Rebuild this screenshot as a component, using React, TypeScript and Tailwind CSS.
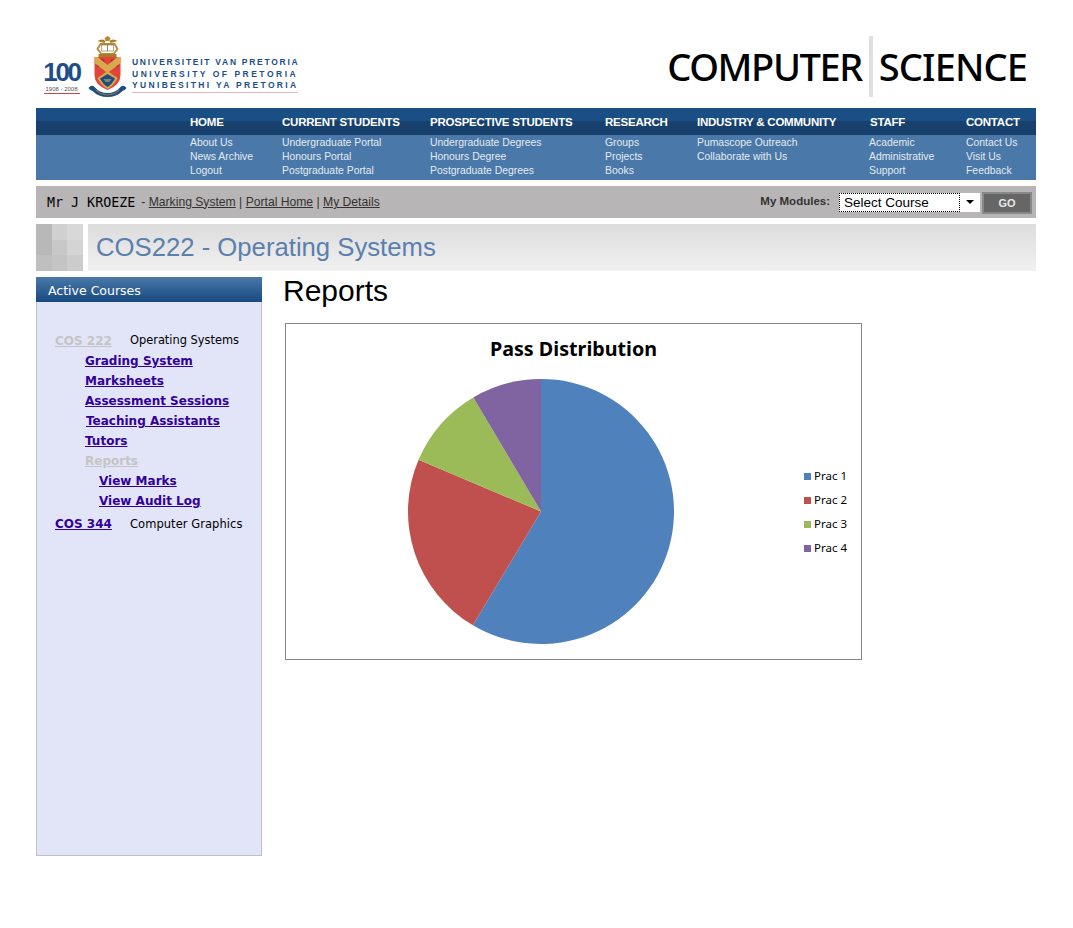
const nav = [
  { h: "HOME", l: ["About Us", "News Archive", "Logout"] },
  { h: "CURRENT STUDENTS", l: ["Undergraduate Portal", "Honours Portal", "Postgraduate Portal"] },
  { h: "PROSPECTIVE STUDENTS", l: ["Undergraduate Degrees", "Honours Degree", "Postgraduate Degrees"] },
  { h: "RESEARCH", l: ["Groups", "Projects", "Books"] },
  { h: "INDUSTRY & COMMUNITY", l: ["Pumascope Outreach", "Collaborate with Us"] },
  { h: "STAFF", l: ["Academic", "Administrative", "Support"] },
  { h: "CONTACT", l: ["Contact Us", "Visit Us", "Feedback"] },
];

function Crest() {
  return (
    <svg width="40" height="62" viewBox="0 0 40 62" className="shrink-0">
      <g transform="translate(-0.5 0)">
        <path d="M20 0l3 2 -1 3h-4l-1-3z" fill="#b98a35" />
        <path d="M10 5q5-3 8 0l-1 2q-4-1-7-2zM30 5q-5-3-8 0l1 2q4-1 7-2z" fill="#a87a2c" />
        <path d="M13 8h14l3 5-4 5H14l-4-5z" fill="none" stroke="#b98a35" strokeWidth="1.8" />
        <path d="M14 9h12v6h-12z" fill="#fff" stroke="#8a6a30" strokeWidth="0.6" />
        <path d="M20 9v6" stroke="#8a6a30" strokeWidth="0.8" />
        <path d="M11 18h18v3H11z" fill="#a87a2c" />
        <path d="M7 21h26v18q0 10-13 15Q7 49 7 39z" fill="#e2443a" />
        <path d="M9 23h8v8H9zM23 23h8v8h-8z" fill="#b5322e" />
        <path d="M20 37L7 27v-6h3l10 8 10-8h3v6z" fill="#d9a94f" />
        <path d="M20 35l10 7q-3 7-10 11q-7-4-10-11z" fill="#d9a94f" />
        <path d="M20 38l7.500 4.500q-3 6-7.500 8.500q-4.500-2.500-7.500-8.500z" fill="#1d4e80" />
        <path d="M16 43h8l-2 3h-4z" fill="#d9b060" opacity="0.55" />
        <path d="M1 52q3-4 6-1q5 6 13 6t13-6q3-3 6 1q-1 2-4 3q-6 6-15 6t-15-6q-3-1-4-3z" fill="#1d4e80" />
        <path d="M8 54q5 5 12 5t12-5" fill="none" stroke="#b98a35" strokeWidth="0.8" />
      </g>
    </svg>
  );
}

function Pie() {
  const cx = 541 - 286, cy = 511.5 - 324, r = 133;
  const slices: [number, number, string][] = [
    [0, 210.8, "#4f81bd"],
    [210.8, 293, "#c0504d"],
    [293, 329.4, "#9bbb59"],
    [329.4, 360, "#8064a2"],
  ];
  const pt = (a: number) => {
    const t = (a * Math.PI) / 180;
    return `${(cx + r * Math.sin(t)).toFixed(2)} ${(cy - 132.5 * Math.cos(t)).toFixed(2)}`;
  };
  return (
    <svg width="420" height="335" viewBox="0 0 420 335" className="absolute left-0 top-0">
      {slices.map(([a, b, c]) => (
        <path key={c} d={`M${cx} ${cy}L${pt(a)}A${r} 132.5 0 ${b - a > 180 ? 1 : 0} 1 ${pt(b)}Z`} fill={c} />
      ))}
    </svg>
  );
}

const tile = ["#b8b8b8", "#d0d0d0", "#d8d8d8", "#b8b8b8", "#c8c8c8", "#d4d4d4", "#bfbfbf", "#c4c4c4", "#cccccc"];

const verdana = "font-['DejaVu_Sans',sans-serif]";
const linkCls = "font-bold text-[12px] leading-[20px] text-[#330099] underline";

export default function App() {
  return (
    <div className="w-[1073px] h-[928px] bg-white pl-[36px] pt-[36px] font-['Liberation_Sans',sans-serif]">
      <div className="w-[1000px]">
        <header className="h-[72px] flex items-start justify-between">
          <div className="flex items-start pl-[7px] h-[62px]">
            <div className="w-[37px] mt-[23px] flex flex-col items-center">
              <div className="text-[#1d4e8a] font-bold text-[26px] leading-[26px] tracking-[-2.300px]">100</div>
              <div className="text-[#555] text-[6px] leading-[8px] whitespace-nowrap">1908 - 2008</div>
              <div className="w-[36px] h-[1px] bg-[#d8434a]" />
            </div>
            <div className="ml-[8px]"><Crest /></div>
            <div className="ml-[4px] mt-[21px] text-[#1d4e8a] font-bold text-[8.5px] leading-[11.5px] whitespace-nowrap">
              <div className="tracking-[1.72px]">UNIVERSITEIT VAN PRETORIA</div>
              <div className="tracking-[2.5px]">UNIVERSITY OF PRETORIA</div>
              <div className="tracking-[2.33px] border-b border-[#f0b0bc] w-[166px]">YUNIBESITHI YA PRETORIA</div>
            </div>
          </div>
          <div className="flex items-center h-[61px] pr-[9px] text-black font-['Noto_Sans',sans-serif] font-medium text-[38px] leading-[61px]">
            <span className="tracking-[-1.4px]">COMPUTER</span>
            <span className="w-[4px] h-[61px] bg-[#e0e0e0] ml-[7px] mr-[6px]" />
            <span className="tracking-[-0.9px]">SCIENCE</span>
          </div>
        </header>

        <nav className="grid grid-cols-[154px_92px_148px_175px_92px_173px_96px_1fr] grid-rows-[27px_45px] bg-[#4a78a8]">
          <div className="bg-[linear-gradient(#1a4f85_50%,#17406c_50%)]" />
          {nav.map((n) => (
            <div key={n.h} className="bg-[linear-gradient(#1a4f85_50%,#17406c_50%)] text-white font-bold text-[11.5px] tracking-[-0.23px] leading-[28px] whitespace-nowrap">{n.h}</div>
          ))}
          <div />
          {nav.map((n) => (
            <div key={n.h} className={`pt-[1px] text-[#e4ebf2] text-[10.4px] leading-[14px] whitespace-nowrap ${n.h === "STAFF" ? "-ml-px" : ""}`}>
              {n.l.map((t) => <div key={t}>{t}</div>)}
            </div>
          ))}
        </nav>

        <div className="mt-[6px] h-[32px] bg-[#b7b5b5] flex items-center justify-between pl-[11px] pr-[4px]">
          <div className="flex items-center text-[#333] text-[12.15px]">
            <span className="font-['DejaVu_Sans_Mono',monospace] text-black text-[13.33px] whitespace-pre mt-[2px]">Mr J KROEZE</span>
            <span className="ml-[6px]">-&nbsp;</span>
            <span className="underline">Marking System</span>
            <span>&nbsp;|&nbsp;</span>
            <span className="underline">Portal Home</span>
            <span>&nbsp;|&nbsp;</span>
            <span className="underline">My Details</span>
          </div>
          <div className="flex items-center">
            <span className="font-bold text-[11.5px] text-[#333] mr-[9px]">My Modules:</span>
            <div className="w-[141px] h-[19px] bg-white flex items-center text-[13.5px] text-black">
              <div className="w-[121px] h-[19px] border border-dotted border-black pl-[4px] leading-[17px]">Select Course</div>
              <div className="flex-1 flex justify-center"><div className="w-0 h-0 border-x-[4px] border-x-transparent border-t-[4px] border-t-black" /></div>
            </div>
            <div className="ml-[2px] mt-[2px] w-[50px] h-[22px] bg-[#666] border-2 border-[#888] text-[#e8e8e8] font-bold text-[11px] leading-[19px] text-center">GO</div>
          </div>
        </div>

        <div className="mt-[6px] h-[47px] flex">
          <div className="w-[47px] h-[47px] grid grid-cols-3 grid-rows-3">
            {tile.map((c, i) => <div key={i} style={{ backgroundColor: c }} />)}
          </div>
          <div className="ml-[5px] flex-1 pl-[8px] bg-[linear-gradient(#dcdcdc,#f1f1f1)] text-[#5b7fae] text-[25.7px] leading-[47px]">COS222 - Operating Systems</div>
        </div>

        <div className="mt-[6px] flex items-start">
          <aside className="w-[226px] h-[579px] bg-[#e1e5f7] border-x border-b border-[#c0c0c8]">
            <div className={`-mx-px h-[25px] bg-[linear-gradient(#4a78a8,#174a80)] text-white text-[12.5px] leading-[27px] pl-[12px] ${verdana}`}>Active Courses</div>
            <div className={`pl-[18px] pt-[28px] ${verdana}`}>
              <div className="flex items-start h-[20px]">
                <span className="w-[75px] font-bold text-[12px] leading-[20px] text-[#c4c4c4] underline mt-[1px]">COS 222</span>
                <span className="text-[11.4px] leading-[20px] text-black">Operating Systems</span>
              </div>
              <div className="pl-[30px] pt-[1px] flex flex-col items-start">
                <a className={linkCls}>Grading System</a>
                <a className={linkCls}>Marksheets</a>
                <a className={linkCls}>Assessment Sessions</a>
                <a className={`${linkCls} ml-[1px]`}>Teaching Assistants</a>
                <a className={linkCls}>Tutors</a>
                <a className={`${linkCls} !text-[#c4c4c4]`}>Reports</a>
                <a className={`${linkCls} ml-[14px]`}>View Marks</a>
                <a className={`${linkCls} ml-[14px]`}>View Audit Log</a>
              </div>
              <div className="flex items-start h-[20px] mt-[3px]">
                <span className={`w-[75px] ${linkCls}`}>COS 344</span>
                <span className="text-[11.5px] tracking-[0.05px] leading-[20px] text-black">Computer Graphics</span>
              </div>
            </div>
          </aside>
          <main className="ml-[21px]">
            <h1 className="text-[30px] leading-[28px] text-black">Reports</h1>
            <div className="relative mt-[18px] ml-[2px] w-[577px] h-[337px] border border-[#868686] bg-white">
              <Pie />
              <div className="absolute left-0 right-0 top-[11px] text-center font-['Noto_Sans',sans-serif] font-bold text-[19.7px] leading-[28px] text-black">Pass Distribution</div>
              <div className="absolute left-[518px] top-[140px] flex flex-col font-['Noto_Sans',sans-serif] text-[11.5px] text-black">
                {[["Prac 1", "#4f81bd"], ["Prac 2", "#c0504d"], ["Prac 3", "#9bbb59"], ["Prac 4", "#8064a2"]].map(([t, c]) => (
                  <div key={t} className="h-[24px] flex items-center whitespace-nowrap">
                    <span className="w-[7px] h-[7px] mr-[3px]" style={{ backgroundColor: c }} />
                    {t}
                  </div>
                ))}
              </div>
            </div>
          </main>
        </div>
      </div>
    </div>
  );
}
